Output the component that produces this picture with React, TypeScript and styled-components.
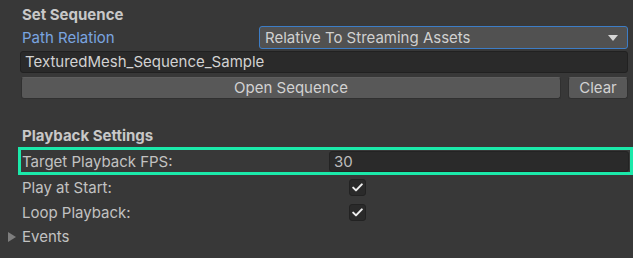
import styled, { createGlobalStyle } from 'styled-components'

const Global = createGlobalStyle`
  html, body {
    margin: 0;
    padding: 0;
    background: #383838;
  }
  body {
    font-family: Inter, "Noto Sans", sans-serif;
    font-size: 15px;
    color: #c4c4c4;
  }
`

const Check = () => (
  <svg width="11" height="9" viewBox="0 0 11 9">
    <path d="M1.2 4.6 L4 7.4 L9.8 1.4" fill="none" stroke="#eeeeee" strokeWidth="2" strokeLinecap="round" strokeLinejoin="round" />
  </svg>
)

const App = () => {
  return (
    <Panel>
      <Global />
      <Header style={{ marginTop: 4 }}>Set Sequence</Header>
      <Row>
        <Label $accent>Path Relation</Label>
        <Dropdown>
          <span>Relative To Streaming Assets</span>
          <Arrow />
        </Dropdown>
      </Row>
      <TextField>TexturedMesh_Sequence_Sample</TextField>
      <ButtonRow>
        <Button $grow>Open Sequence</Button>
        <Button>Clear</Button>
      </ButtonRow>

      <Header style={{ marginTop: 26 }}>Playback Settings</Header>
      <Highlight>
        <Label>Target Playback FPS:</Label>
        <NumberField>30</NumberField>
      </Highlight>
      <ToggleRow>
        <Label>Play at Start:</Label>
        <CheckBox><Check /></CheckBox>
      </ToggleRow>
      <ToggleRow>
        <Label>Loop Playback:</Label>
        <CheckBox><Check /></CheckBox>
      </ToggleRow>
      <Foldout>
        <Triangle />
        <Label>Events</Label>
      </Foldout>
    </Panel>
  )
}

const Panel = styled.div`
  width: 633px;
  height: 258px;
  box-sizing: border-box;
  padding: 0 5px 0 21px;
  display: flex;
  flex-direction: column;
  overflow: hidden;
`

const Header = styled.div`
  height: 22px;
  line-height: 22px;
  padding-left: 1px;
  font-weight: 700;
  color: #c8c8c8;
`

const Row = styled.div`
  display: flex;
  align-items: center;
  height: 23px;
`

const Label = styled.div<{ $accent?: boolean }>`
  padding-left: 1px;
  color: ${p => (p.$accent ? '#7aa5e0' : '#c2c2c2')};
  white-space: nowrap;
`

const Dropdown = styled.div`
  margin-left: auto;
  width: 369px;
  height: 23px;
  box-sizing: border-box;
  display: flex;
  align-items: center;
  justify-content: space-between;
  padding: 0 9px 0 5px;
  background: #515151;
  border: 1px solid #3d7dc6;
  border-radius: 3px;
  color: #d0d0d0;
`

const Arrow = styled.div`
  width: 0;
  height: 0;
  border-left: 5px solid transparent;
  border-right: 5px solid transparent;
  border-top: 6px solid #d6d6d6;
`

const TextField = styled.div`
  margin-top: 2px;
  height: 22px;
  margin-left: -1px;
  box-sizing: border-box;
  line-height: 20px;
  padding-left: 4px;
  background: #2a2a2a;
  border: 1px solid #212121;
  border-radius: 3px;
  color: #d2d2d2;
`

const ButtonRow = styled.div`
  display: flex;
  gap: 7px;
  margin-top: 4px;
`

const Button = styled.div<{ $grow?: boolean }>`
  flex: ${p => (p.$grow ? 1 : '0 0 60px')};
  height: 22px;
  box-sizing: border-box;
  line-height: 20px;
  text-align: center;
  background: #585858;
  border: 1px solid #303030;
  border-top-color: #5f5f5f;
  border-radius: 3px;
  color: #d2d2d2;
`

const Highlight = styled.div`
  margin: 0 -5px 0 -3px;
  height: 28px;
  box-sizing: border-box;
  border: 3px solid #1be9aa;
  display: flex;
  align-items: center;
  padding-left: 0;
`

const NumberField = styled.div`
  margin-left: auto;
  margin-right: 1px;
  width: 300px;
  height: 21px;
  box-sizing: border-box;
  line-height: 19px;
  padding-left: 4px;
  background: #2a2a2a;
  border: 1px solid #232323;
  border-radius: 3px;
  color: #bdbdbd;
`

const ToggleRow = styled.div`
  display: flex;
  align-items: center;
  height: 25px;
  position: relative;
`

const CheckBox = styled.div`
  position: absolute;
  left: 328px;
  width: 17px;
  height: 17px;
  box-sizing: border-box;
  background: #2a2a2a;
  border: 1px solid #222;
  border-radius: 3px;
  display: flex;
  align-items: center;
  justify-content: center;
`

const Foldout = styled.div`
  display: flex;
  align-items: center;
  height: 23px;
  margin-left: -13px;
  gap: 5px;
`

const Triangle = styled.div`
  width: 0;
  height: 0;
  border-top: 5px solid transparent;
  border-bottom: 5px solid transparent;
  border-left: 8px solid #7e7e7e;
`

export default App
